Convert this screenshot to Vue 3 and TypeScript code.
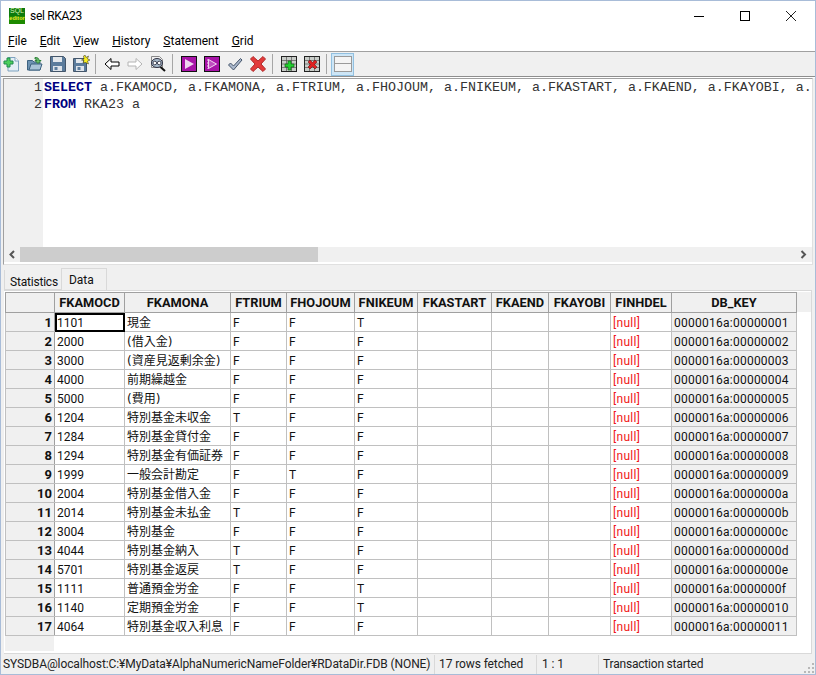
<script setup lang="ts">
interface Row {
  code: string
  name: string
  trium: string
  hojoum: string
  nikeum: string
  key: string
}

const menus = [
  { key: 'F', rest: 'ile' },
  { key: 'E', rest: 'dit' },
  { key: 'V', rest: 'iew' },
  { key: 'H', rest: 'istory' },
  { key: 'S', rest: 'tatement' },
  { key: 'G', rest: 'rid' },
]

const columns = [
  { title: 'FKAMOCD', width: 70 },
  { title: 'FKAMONA', width: 106 },
  { title: 'FTRIUM', width: 56 },
  { title: 'FHOJOUM', width: 68 },
  { title: 'FNIKEUM', width: 63 },
  { title: 'FKASTART', width: 74 },
  { title: 'FKAEND', width: 57 },
  { title: 'FKAYOBI', width: 62 },
  { title: 'FINHDEL', width: 61 },
  { title: 'DB_KEY', width: 125 },
]

const rows: Row[] = [
  { code: '1101', name: '現金', trium: 'F', hojoum: 'F', nikeum: 'T', key: '00000001' },
  { code: '2000', name: '(借入金)', trium: 'F', hojoum: 'F', nikeum: 'F', key: '00000002' },
  { code: '3000', name: '(資産見返剰余金)', trium: 'F', hojoum: 'F', nikeum: 'F', key: '00000003' },
  { code: '4000', name: '前期繰越金', trium: 'F', hojoum: 'F', nikeum: 'F', key: '00000004' },
  { code: '5000', name: '(費用)', trium: 'F', hojoum: 'F', nikeum: 'F', key: '00000005' },
  { code: '1204', name: '特別基金未収金', trium: 'T', hojoum: 'F', nikeum: 'F', key: '00000006' },
  { code: '1284', name: '特別基金貸付金', trium: 'F', hojoum: 'F', nikeum: 'F', key: '00000007' },
  { code: '1294', name: '特別基金有価証券', trium: 'F', hojoum: 'F', nikeum: 'F', key: '00000008' },
  { code: '1999', name: '一般会計勘定', trium: 'F', hojoum: 'T', nikeum: 'F', key: '00000009' },
  { code: '2004', name: '特別基金借入金', trium: 'F', hojoum: 'F', nikeum: 'F', key: '0000000a' },
  { code: '2014', name: '特別基金未払金', trium: 'T', hojoum: 'F', nikeum: 'F', key: '0000000b' },
  { code: '3004', name: '特別基金', trium: 'F', hojoum: 'F', nikeum: 'F', key: '0000000c' },
  { code: '4044', name: '特別基金納入', trium: 'T', hojoum: 'F', nikeum: 'F', key: '0000000d' },
  { code: '5701', name: '特別基金返戻', trium: 'T', hojoum: 'F', nikeum: 'F', key: '0000000e' },
  { code: '1111', name: '普通預金労金', trium: 'F', hojoum: 'F', nikeum: 'T', key: '0000000f' },
  { code: '1140', name: '定期預金労金', trium: 'F', hojoum: 'F', nikeum: 'T', key: '00000010' },
  { code: '4064', name: '特別基金収入利息', trium: 'F', hojoum: 'F', nikeum: 'F', key: '00000011' },
]
</script>

<template>
  <div class="window">
    <header class="titlebar">
      <svg class="app-icon" width="16" height="16" viewBox="0 0 16 16">
        <rect width="16" height="16" fill="#0d7a0d" />
        <rect y="8" width="16" height="8" fill="#1d8a00" />
      </svg>
      <span class="app-tag"><b>SQL</b><i>editor</i></span>
      <span class="title">sel RKA23</span>
      <div class="controls">
        <svg width="46" height="30" viewBox="0 0 46 30"><path d="M18 15.5h10" stroke="#000" /></svg>
        <svg width="46" height="30" viewBox="0 0 46 30"><rect x="18.5" y="10.5" width="9" height="9" fill="none" stroke="#000" /></svg>
        <svg width="46" height="30" viewBox="0 0 46 30"><path d="M18 10l10 10M28 10L18 20" stroke="#222" fill="none" /></svg>
      </div>
    </header>

    <nav class="menubar">
      <span v-for="m in menus" :key="m.key" class="menu"><u>{{ m.key }}</u>{{ m.rest }}</span>
    </nav>

    <div class="toolbar">
      <span class="tool">
        <svg width="18" height="18" viewBox="0 0 18 18"><path d="M5 2.500h7l3.500 3.500v10H5z" fill="#e4eef6" stroke="#7fa3c0" /><path d="M12 2.500V6h3.500" fill="#fff" stroke="#7fa3c0" /><path d="M4 3v3H1v3h3v3h3V9h3V6H7V3z" fill="#4ccf5c" stroke="#1e8a4e" /></svg>
      </span>
      <span class="tool">
        <svg width="18" height="18" viewBox="0 0 18 18"><path d="M1.500 5.500h5l1.500 1.500h6v8h-12.500z" fill="#6d92b2" stroke="#3d6280" /><path d="M3 15l2-6h11l-2 6z" fill="#a9c4d8" stroke="#3d6280" /><path d="M9 2.500c3 0 4 1 4 3h2l-3 3-3-3h2c0-1-.5-1.500-2-1.500z" fill="#66c46a" stroke="#2f7f3a" /></svg>
      </span>
      <span class="tool">
        <svg width="18" height="18" viewBox="0 0 18 18"><path d="M1.500 1.500h13l2 2v13h-15z" fill="#5c7c9c" stroke="#44566a" /><rect x="4" y="2" width="9" height="5" fill="#e4e8ec" /><rect x="4" y="11" width="9" height="5" fill="#dfe4ea" /><rect x="5.500" y="12" width="3" height="3" fill="#5c7c9c" /></svg>
      </span>
      <span class="tool">
        <svg width="18" height="18" viewBox="0 0 18 18"><path d="M1.500 3.500h11l2 2v11h-13z" fill="#5c7c9c" stroke="#44566a" /><rect x="4" y="4" width="7" height="4" fill="#e4e8ec" /><rect x="4" y="11" width="8" height="5" fill="#dfe4ea" /><rect x="5.500" y="12" width="3" height="3" fill="#5c7c9c" /><path d="M13 0l1 2.500L16.500 1l-1 3 2.500 1-2.500 1 1 3-3-1.500L11 8l1-2.500L9.500 5 12 4l-.5-3z" fill="#f8ee1c" stroke="#222" stroke-width=".5" /></svg>
      </span>
      <i class="sep" />
      <span class="tool">
        <svg width="16" height="14" viewBox="0 0 16 14"><path d="M1 7l6-5.500V5h8v4H7v3.500z" fill="#fff" stroke="#000" /></svg>
      </span>
      <span class="tool">
        <svg width="16" height="14" viewBox="0 0 16 14"><path d="M15 7L9 1.500V5H1v4h8v3.500z" fill="#fff" stroke="#b4b4b4" /></svg>
      </span>
      <span class="tool">
        <svg width="18" height="18" viewBox="0 0 18 18"><path d="M2.500 1.500h8l3 3v8h-11z" fill="#f0f0f0" stroke="#888" /><ellipse cx="8" cy="8" rx="5.500" ry="4.500" fill="#a8bccc" stroke="#334" /><circle cx="5.800" cy="8" r="1.800" fill="#fff" stroke="#223" stroke-width=".8" /><circle cx="10.200" cy="8" r="1.800" fill="#fff" stroke="#223" stroke-width=".8" /><path d="M11.500 12l4.500 4" stroke="#111" stroke-width="2" /></svg>
      </span>
      <i class="sep" />
      <span class="tool">
        <svg width="16" height="16" viewBox="0 0 16 16"><rect x=".5" y=".5" width="15" height="15" fill="#a814a8" stroke="#111" /><path d="M4 3l9 5-9 5z" fill="#f0d4f0" /></svg>
      </span>
      <span class="tool">
        <svg width="16" height="16" viewBox="0 0 16 16"><rect x=".5" y=".5" width="15" height="15" fill="#a814a8" stroke="#111" /><path d="M4.500 3.500l8 4.500-8 4.500z" fill="#c050c0" stroke="#f0d4f0" /><path d="M4 3v10" stroke="#f0d4f0" stroke-dasharray="2 1" /></svg>
      </span>
      <span class="tool">
        <svg width="16" height="16" viewBox="0 0 16 16"><path d="M1.500 9l2-2 3 3 7-7.500 1.500 1.500-8.500 10z" fill="#aab8cc" stroke="#44546a" /></svg>
      </span>
      <span class="tool">
        <svg width="16" height="16" viewBox="0 0 16 16"><path d="M3 .5L8 5l5-4.500L15.500 3 11 8l4.500 5L13 15.500 8 11l-5 4.500L.5 13 5 8 .5 3z" fill="#e23a3a" stroke="#b02a2a" /></svg>
      </span>
      <i class="sep" />
      <span class="tool">
        <svg width="16" height="16" viewBox="0 0 16 16"><rect x=".5" y=".5" width="15" height="15" fill="#c8ccc8" stroke="#222" /><path d="M1 4.500h14M1 8h14M1 11.500h14M5.500 1v14M10.500 1v14" stroke="#555" stroke-width=".7" /><path d="M7 5v3H4v3h3v3h3v-3h3V8h-3V5z" fill="#22d030" stroke="#116618" stroke-width=".7" /></svg>
      </span>
      <span class="tool">
        <svg width="16" height="16" viewBox="0 0 16 16"><rect x=".5" y=".5" width="15" height="15" fill="#c8ccc8" stroke="#222" /><path d="M1 4.500h14M1 8h14M1 11.500h14M5.500 1v14M10.500 1v14" stroke="#555" stroke-width=".7" /><path d="M4 6l2-2 2.500 2.500L11 4l2 2-2.500 2.500L13 11l-2 2-2.500-2.500L6 13l-2-2 2.500-2.500z" fill="#e02020" stroke="#701010" stroke-width=".6" /></svg>
      </span>
      <i class="sep" />
      <span class="tool active">
        <svg width="18" height="16" viewBox="0 0 18 16"><rect x=".5" y=".5" width="17" height="15" fill="#f4f4f4" stroke="#9a9a9a" /><path d="M1 7.500h16" stroke="#9a9a9a" /></svg>
      </span>
    </div>

    <section class="editor">
      <div class="code-wrap">
        <div class="gutter">
          <div>1</div>
          <div>2</div>
        </div>
        <pre class="code"><b>SELECT</b> a.FKAMOCD, a.FKAMONA, a.FTRIUM, a.FHOJOUM, a.FNIKEUM, a.FKASTART, a.FKAEND, a.FKAYOBI, a.
<b>FROM</b> RKA23 a</pre>
      </div>
      <div class="hscroll">
        <svg class="arrow" width="16" height="15" viewBox="0 0 16 15"><path d="M10 4l-3.500 3.500 3.500 3.500" fill="none" stroke="#555" stroke-width="2" /></svg>
        <div class="track"><div class="thumb" /></div>
        <svg class="arrow" width="17" height="15" viewBox="0 0 17 15"><path d="M6.500 4l3.500 3.500-3.500 3.500" fill="none" stroke="#555" stroke-width="2" /></svg>
      </div>
    </section>

    <div class="tabs">
      <span class="tab">Statistics</span>
      <span class="tab current">Data</span>
    </div>

    <section class="grid-panel">
      <table class="grid">
        <colgroup>
          <col style="width: 49px" />
          <col v-for="c in columns" :key="c.title" :style="{ width: c.width + 'px' }" />
        </colgroup>
        <thead>
          <tr>
            <th class="corner"></th>
            <th v-for="c in columns" :key="c.title">{{ c.title }}</th>
          </tr>
        </thead>
        <tbody>
          <tr v-for="(r, i) in rows" :key="r.code">
            <th class="rownum">{{ i + 1 }}</th>
            <td :class="{ focused: i === 0 }">{{ r.code }}</td>
            <td class="jp">{{ r.name }}</td>
            <td>{{ r.trium }}</td>
            <td>{{ r.hojoum }}</td>
            <td>{{ r.nikeum }}</td>
            <td></td>
            <td></td>
            <td></td>
            <td class="null">[null]</td>
            <td class="dbkey">0000016a:{{ r.key }}</td>
          </tr>
        </tbody>
      </table>
      <div class="header-fill" />
      <div class="rownum-fill" />
    </section>

    <footer class="statusbar">
      <span class="pane conn">SYSDBA@localhost:C:¥MyData¥AlphaNumericNameFolder¥RDataDir.FDB (NONE)</span>
      <span class="pane rows">17 rows fetched</span>
      <span class="pane pos">1 : 1</span>
      <span class="pane msg">Transaction started</span>
      <svg class="grip" width="12" height="12" viewBox="0 0 12 12" fill="#b8b8b8">
        <rect x="9" y="1" width="2" height="2" /><rect x="5" y="5" width="2" height="2" /><rect x="9" y="5" width="2" height="2" />
        <rect x="1" y="9" width="2" height="2" /><rect x="5" y="9" width="2" height="2" /><rect x="9" y="9" width="2" height="2" />
      </svg>
    </footer>
  </div>
</template>

<style>
html,
body {
  margin: 0;
  background: #fff;
}
</style>

<style scoped>
.window {
  box-sizing: border-box;
  width: 816px;
  height: 675px;
  display: flex;
  flex-direction: column;
  border: 1px solid #a8bcd8;
  background: #f0f0f0;
  font-family: Roboto, "Noto Sans CJK JP", sans-serif;
  font-size: 12px;
  color: #111;
  overflow: hidden;
}

.titlebar {
  position: relative;
  height: 29px;
  display: flex;
  align-items: center;
  padding-left: 8px;
  background: #fff;
  flex: none;
}

.app-icon {
  flex: none;
}

.app-tag {
  position: absolute;
  left: 8px;
  top: 6px;
  width: 16px;
  height: 16px;
  display: flex;
  flex-direction: column;
  align-items: center;
  font-family: "Liberation Sans", sans-serif;
  font-size: 7px;
  line-height: 7.500px;
  color: #d8f0b0;
  overflow: hidden;
}

.app-tag b {
  font-weight: 400;
}

.app-tag i {
  font-style: normal;
  font-weight: 700;
  font-size: 5.500px;
  color: #e8e830;
}

.title {
  margin-left: 5px;
  letter-spacing: -0.3px;
  color: #000;
}

.controls {
  margin-left: auto;
  display: flex;
  margin-right: 1px;
}

.menubar {
  height: 21px;
  display: flex;
  align-items: center;
  gap: 13px;
  padding-left: 7px;
  background: #fff;
  border-bottom: 1px solid #a0a0a0;
  color: #000;
  flex: none;
}

.toolbar {
  height: 24px;
  display: flex;
  align-items: center;
  border-bottom: 1px solid #8e8e8e;
  box-shadow: 0 1px 0 #fff;
  background: #f0f0f0;
  flex: none;
}

.tool {
  width: 23px;
  height: 23px;
  display: flex;
  align-items: center;
  justify-content: center;
  flex: none;
}

.tool:first-child {
  margin-left: -1px;
}

.tool.active {
  box-sizing: border-box;
  background: #cde6f7;
  border: 1px solid #92c0e0;
}

.sep {
  width: 1px;
  height: 20px;
  margin: 0 4px 0 3px;
  background: #a6a6a6;
  flex: none;
}

.editor {
  height: 185px;
  margin: 1px 2px 0 2px;
  display: flex;
  flex-direction: column;
  border-top: 1px solid #a0a0a0;
  border-left: 1px solid #a0a0a0;
  border-right: 1px solid #e0e0e0;
  border-bottom: 1px solid #e0e0e0;
  background: #fff;
  flex: none;
}

.code-wrap {
  flex: 1;
  display: flex;
  min-height: 0;
  overflow: hidden;
}

.gutter {
  width: 39px;
  background: #f0f0f0;
  text-align: right;
  font-family: "Liberation Mono", monospace;
  font-size: 13.330px;
  line-height: 17px;
  color: #333;
  flex: none;
}

.gutter div {
  padding-right: 1px;
}

.code {
  margin: 0;
  padding: 0 0 0 1px;
  font-family: "Liberation Mono", monospace;
  font-size: 13.330px;
  line-height: 17px;
  color: #333;
  white-space: pre;
}

.code b {
  color: #00007f;
  font-weight: 700;
}

.hscroll {
  height: 15px;
  display: flex;
  align-items: center;
  background: #f0f0f0;
  margin-bottom: 2px;
  flex: none;
}

.arrow {
  flex: none;
}

.track {
  flex: 1;
  height: 15px;
}

.thumb {
  width: 298px;
  height: 15px;
  background: #cdcdcd;
}

.tabs {
  height: 20px;
  margin-top: 5px;
  display: flex;
  align-items: flex-end;
  padding-left: 3px;
  flex: none;
}

.tab {
  height: 19px;
  padding: 0 3px 0 5px;
  line-height: 24px;
  letter-spacing: -0.2px;
  border-bottom: 1px solid #d9d9d9;
  border-left: 1px solid #d9d9d9;
}

.tab.current {
  height: 21px;
  padding: 0 12px 0 7px;
  line-height: 22px;
  letter-spacing: 0;
  background: #f0f0f0;
  border: 1px solid #d9d9d9;
  border-bottom: none;
}

.grid-panel {
  position: relative;
  height: 361px;
  margin: 0 3px 0 3px;
  padding: 1px 0 0 1px;
  background: #fff;
  border-top: 1px solid #d9d9d9;
  border-right: 1px solid #d9d9d9;
  border-bottom: 1px solid #d9d9d9;
  flex: none;
}

.grid {
  position: relative;
  z-index: 1;
  table-layout: fixed;
  width: 791px;
  border-collapse: collapse;
  border: 1px solid #a0a0a0;
  font-size: 12px;
}

.grid th,
.grid td {
  box-sizing: border-box;
  height: 19px;
  padding: 2px 0 0 2px;
  border: 1px solid #c0c0c0;
  white-space: nowrap;
  overflow: hidden;
  line-height: 16px;
}

.grid thead th {
  height: 20px;
  padding: 0;
  background: #f0f0f0;
  font-weight: 700;
  font-size: 12.800px;
  text-align: center;
  color: #111;
  border-color: #a0a0a0;
}

.grid .rownum {
  padding: 2px 2px 0 0;
  background: #f0f0f0;
  text-align: right;
  font-size: 13px;
  font-weight: 700;
  color: #111;
  border-right-color: #a0a0a0;
}

.grid td.focused {
  outline: 2px solid #000;
  outline-offset: -2px;
}

.grid .jp {
  font-family: "DejaVu Sans", "Noto Sans CJK JP", sans-serif;
}

.grid .null {
  letter-spacing: 0.3px;
  color: #f01818;
}

.grid .dbkey {
  background: #f0f0f0;
  letter-spacing: 0.25px;
}

.header-fill {
  position: absolute;
  left: 1px;
  right: 0;
  top: 1px;
  height: 20px;
  background: #f0f0f0;
}

.rownum-fill {
  position: absolute;
  left: 1px;
  top: 1px;
  width: 49px;
  bottom: 2px;
  background: #f0f0f0;
}

.statusbar {
  position: relative;
  flex: 1;
  display: flex;
  align-items: center;
  letter-spacing: -0.1px;
  color: #222;
}

.pane {
  box-sizing: border-box;
  height: 19px;
  line-height: 18px;
  padding-left: 2px;
  border-right: 1px solid #d9d9d9;
  white-space: nowrap;
  flex: none;
}

.conn {
  width: 434px;
}

.rows {
  width: 102px;
  padding-left: 4px;
}

.pos {
  width: 62px;
  padding-left: 5px;
}

.msg {
  padding-left: 4px;
  letter-spacing: -0.2px;
  border-right: none;
}

.grip {
  position: absolute;
  right: 0;
  bottom: 0;
}
</style>
